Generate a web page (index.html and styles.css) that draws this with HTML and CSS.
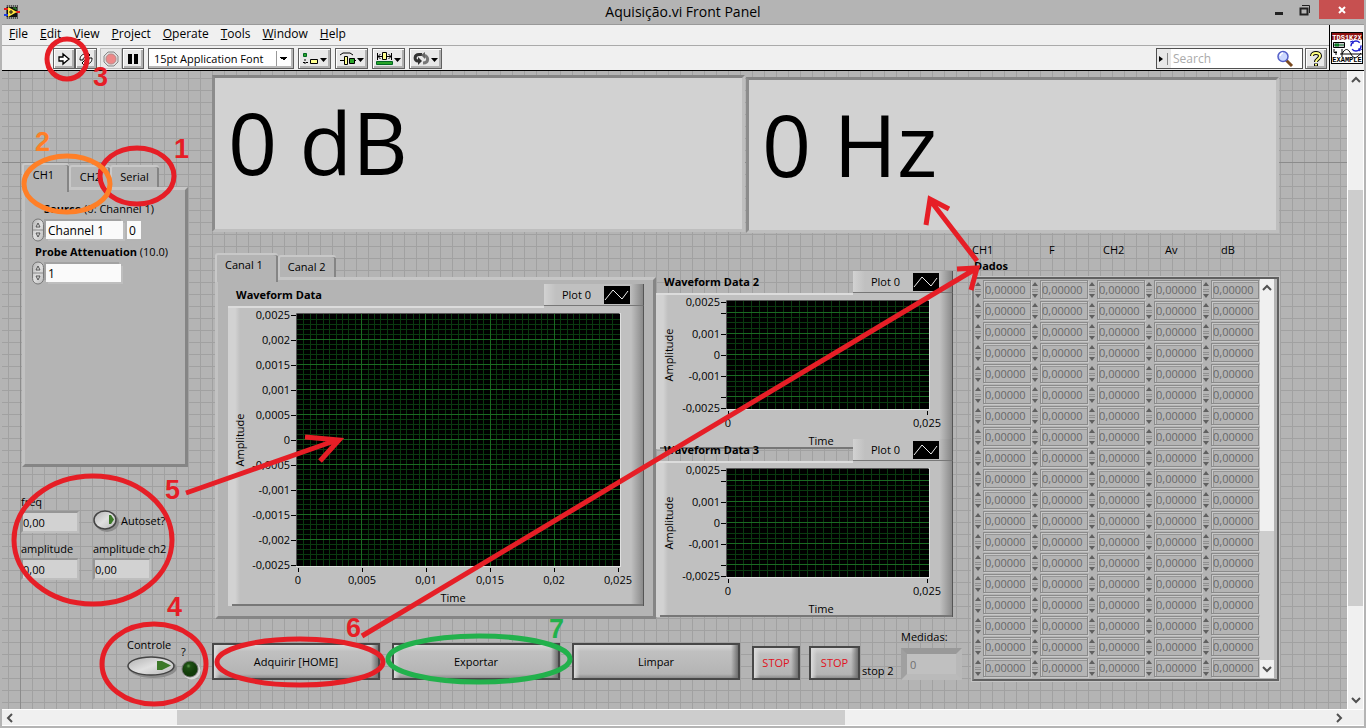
FILE: index.html
```html
<!DOCTYPE html>
<html lang="pt">
<head>
<meta charset="utf-8">
<title>Aquisição.vi Front Panel</title>
<link rel="stylesheet" href="styles.css">
</head>
<body>
<div class="window">
  <header class="titlebar">
    <svg class="app-icon" width="16" height="14" viewBox="0 0 16 14"><rect x="2" width="12" height="14" fill="#555"/><path d="M2 1h12M2 13h12" stroke="#ddd" stroke-dasharray="1 1"/><rect x="3" y="2" width="10" height="10" fill="#111"/><path d="M0 4h4M12 7h4" stroke="#e02020" stroke-width="2"/><path d="M0 10h4" stroke="#2040e0" stroke-width="2"/><path d="M4 2l9 5-9 5z" fill="#ffe640"/><path d="M5 7h4M7 5v4" stroke="#111"/><path d="M9 3h3v2" stroke="#30a030" fill="none"/></svg>
    <h1 class="title">Aquisição.vi Front Panel</h1>
    <div class="win-buttons">
      <button class="win-btn" aria-label="Minimize"><svg width="10" height="12"><path d="M1 9.500h8" stroke="#222" stroke-width="3"/></svg></button>
      <button class="win-btn" aria-label="Restore"><svg width="12" height="12"><path d="M1.500 4.500h7v6h-7z" fill="none" stroke="#222" stroke-width="2"/><path d="M3 1.500h7.500V9" fill="none" stroke="#222"/></svg></button>
      <button class="win-btn close" aria-label="Close"><svg width="10" height="10"><path d="M2 2l6 6M8 2L2 8" stroke="#fff" stroke-width="2"/></svg></button>
    </div>
  </header>

  <div class="chrome">
    <div class="bars">
      <nav class="menu">
        <a href="#"><u>F</u>ile</a><a href="#"><u>E</u>dit</a><a href="#"><u>V</u>iew</a><a href="#"><u>P</u>roject</a><a href="#"><u>O</u>perate</a><a href="#"><u>T</u>ools</a><a href="#"><u>W</u>indow</a><a href="#"><u>H</u>elp</a>
      </nav>
      <div class="toolbar">
        <div class="tool-group">
          <button class="tool" aria-label="Run"><svg width="14" height="14"><path d="M2 5h4V2l6 5-6 5V9H2z" fill="#fff" stroke="#000" stroke-width="1.300"/></svg></button>
          <button class="tool" aria-label="Run continuously"><svg width="18" height="16"><path d="M3 9c0-4 2-6 6-6V0l4 4-4 4V6C7 6 6 7 6 9z" fill="#fff" stroke="#000"/><path d="M15 7c0 4-2 6-6 6v3l-4-4 4-4v2c2 0 3-1 3-3z" fill="#fff" stroke="#000"/></svg></button>
        </div>
        <div class="tool-group">
          <button class="tool flat" aria-label="Abort"><svg width="16" height="16"><path d="M5 1h6l4 4v6l-4 4H5l-4-4V5z" fill="#ddd" stroke="#888"/><circle cx="8" cy="8" r="5" fill="#ee8888" stroke="#b88"/></svg></button>
          <button class="tool" aria-label="Pause"><svg width="12" height="12"><path d="M1 1h4v10H1zM7 1h4v10H7z" fill="#000"/></svg></button>
        </div>
        <select class="font-select" aria-label="Font"><option>15pt Application Font</option></select>
        <button class="tool wide" aria-label="Align"><svg width="26" height="14"><path d="M1.500 1.500h3v3h-3z" fill="#28a428" stroke="#062"/><path d="M3 7v6M1 10.500h5" stroke="#000" stroke-dasharray="2 1"/><path d="M8.500 7.500h7v4h-7z" fill="#ffff90" stroke="#000"/><path d="M18 6h7l-3.500 4z"/></svg></button>
        <button class="tool wide" aria-label="Distribute"><svg width="26" height="14"><path d="M1 3l3-2h7l3 2" fill="none" stroke="#000"/><path d="M1 8.500h4M15 8.500h2" stroke="#000"/><path d="M5.500 4.500h3v8h-3z" fill="#ffff90" stroke="#000"/><path d="M10.500 6.500h5v5h-5z" fill="#28a428" stroke="#000"/><path d="M18 6h7l-3.500 4z"/></svg></button>
        <button class="tool wide" aria-label="Resize"><svg width="26" height="14"><path d="M1.500 1v7M15.500 1v7M2 4.500h4M11 4.500h4M4.500 2L2 4.500l2.500 2.500M12.500 2l2.500 2.500-2.500 2.500" fill="none" stroke="#000"/><path d="M6.500 .5h4v7h-4z" fill="#ffff90" stroke="#000"/><path d="M.5 9.500h16v3H.5z" fill="#28a428" stroke="#062"/><path d="M18 6h7l-3.500 4z"/></svg></button>
        <button class="tool wide" aria-label="Reorder"><svg width="26" height="14"><path d="M9 2.500H6C1 2.500 1 9 5 9" fill="none" stroke="#333" stroke-width="3"/><path d="M5 5v8l4-4z" fill="#333"/><path d="M10 11c6 0 6-7 1-7.500" fill="none" stroke="#777" stroke-width="3"/><path d="M12 0v7L8 3z" fill="#666"/><path d="M18 6h7l-3.500 4z"/></svg></button>
        <div class="search">
          <button class="search-toggle" aria-label="Search options"><svg width="12" height="12"><path d="M1 3l4 3-4 3z"/><path d="M9.500 0v12" stroke="#888"/></svg></button>
          <input type="search" placeholder="Search" aria-label="Search">
          <svg width="18" height="18"><path d="M10 10l6 6" stroke="#7a4a20" stroke-width="3"/><circle cx="7" cy="6.500" r="5" fill="#ccd8ff" stroke="#5560c8" stroke-width="1.500"/><path d="M4 6q1-3 3-3" stroke="#fff" fill="none" stroke-width="1.500"/></svg>
        </div>
        <button class="tool help" aria-label="Help"><svg width="14" height="16"><path d="M3 5c0-4 8-4 8 0 0 3-4 3-4 6M7 12.500v2.500" fill="none" stroke="#000" stroke-width="4"/><path d="M3 5c0-4 8-4 8 0 0 3-4 3-4 6M7 13v1.500" fill="none" stroke="#ffff80" stroke-width="2"/></svg></button>
      </div>
    </div>
    <div class="vi-icon">
      <svg width="32" height="32"><rect x=".5" y=".5" width="31" height="31" fill="#fff" stroke="#000"/><rect x="1" y="1" width="30" height="7" fill="#8c1010"/><path d="M2.500 10.500h11v5h-11z" fill="#ccc" stroke="#000"/><path d="M4 12h4v2H4zM10 12v2M12 12v2" fill="#2a2" stroke="#062"/><path d="M3 17v3.500h3M5 19v4" fill="none" stroke="#000"/><path d="M9 22h22M11 25V17M11 22c3-6 6-6 9 0s6 4 10-1" fill="none" stroke="#000"/><circle cx="25" cy="14" r="5" fill="none" stroke="#2020d0" stroke-width="1.500" stroke-dasharray="12 3"/><path d="M19 10l3-1v3M31 17l-3 2v-3" fill="none" stroke="#2020d0"/><text class="vi-top" x="16" y="7.500">TDS1K2X</text><text class="vi-bottom" x="16" y="30">EXAMPLE</text></svg>
    </div>
  </div>

  <div class="workspace">
    <main class="canvas">
      <section class="side">
        <div class="tabs">
          <button class="tab active">CH1</button><button class="tab">CH2</button><button class="tab last">Serial</button>
        </div>
        <div class="tab-body side-body">
          <label class="caption source" for="source"><b>Source</b> (0: Channel 1)</label>
          <div class="ring">
            <svg class="spin" width="12" height="24" viewBox="0 0 12 24"><use href="#spinner"/></svg>
            <input id="source" class="field channel" value="Channel 1"><input class="field index" value="0" aria-label="Source index">
          </div>
          <label class="caption" for="probe"><b>Probe Attenuation</b> (10.0)</label>
          <div class="ring">
            <svg class="spin" width="12" height="24" viewBox="0 0 12 24"><use href="#spinner"/></svg>
            <input id="probe" class="field probe" value="1">
          </div>
        </div>

        <div class="readings">
          <div class="reading"><label for="freq">freq</label><input id="freq" class="indicator" value="0,00" readonly></div>
          <button class="oval-control"><svg width="28" height="24"><use href="#oval-small"/></svg><span>Autoset?</span></button>
          <div class="reading"><label for="amp1">amplitude</label><input id="amp1" class="indicator" value="0,00" readonly></div>
          <div class="reading"><label for="amp2">amplitude ch2</label><input id="amp2" class="indicator" value="0,00" readonly></div>
        </div>

        <div class="controle">
          <button class="oval-stack"><span>Controle</span><svg width="52" height="24"><ellipse cx="26" cy="13" rx="24" ry="10" fill="#8c8c8c"/><ellipse cx="24" cy="11" rx="23" ry="9" fill="url(#metal)" stroke="#444" stroke-width="1.500"/><path d="M30 6h5l9 4.500-9 4.500h-5z" fill="#3c7828"/></svg></button>
          <div class="led"><span>?</span><svg width="20" height="20"><circle cx="10.500" cy="10.500" r="9" fill="#d8d8d8"/><circle cx="9" cy="9" r="8.500" fill="#777"/><circle cx="9" cy="9" r="7.500" fill="url(#led)"/></svg></div>
        </div>
      </section>

      <section class="main">
        <div class="displays">
          <output class="display">0 dB</output>
          <output class="display second">0 Hz</output>
        </div>
        <div class="lower">
          <div class="plots-side">
            <div class="plots">
              <div class="canal">
                <div class="tabs">
                  <button class="tab active">Canal 1</button><button class="tab last">Canal 2</button>
                </div>
                <div class="tab-body canal-body">
                  <div class="graph">
                    <div class="graph-head"><h2>Waveform Data</h2><div class="legend">Plot 0 <svg width="26" height="18"><use href="#wave"/></svg></div></div>
                    <svg class="plot" data-plot="large" width="416" height="300"></svg>
                  </div>
                </div>
              </div>
              <div class="stack">
                <div class="graph">
                  <div class="graph-head"><h2>Waveform Data 2</h2><div class="legend">Plot 0 <svg width="26" height="18"><use href="#wave"/></svg></div></div>
                  <svg class="plot" data-plot="small" width="297" height="156"></svg>
                </div>
                <div class="graph overlap">
                  <div class="graph-head"><h2>Waveform Data 3</h2><div class="legend">Plot 0 <svg width="26" height="18"><use href="#wave"/></svg></div></div>
                  <svg class="plot" data-plot="small" width="297" height="156"></svg>
                </div>
              </div>
            </div>
            <div class="actions">
              <button class="push">Adquirir [HOME]</button>
              <button class="push">Exportar</button>
              <button class="push">Limpar</button>
              <button class="push stop">STOP</button>
              <button class="push stop two" id="stop2">STOP</button>
              <label class="stop-label" for="stop2">stop 2</label>
              <div class="medidas"><label for="medidas">Medidas:</label><input id="medidas" value="0" disabled></div>
            </div>
          </div>

          <div class="data">
            <div class="columns"><span>CH1</span><span>F</span><span>CH2</span><span>Av</span><span>dB</span></div>
            <h2 class="data-title">Dados</h2>
            <div class="data-frame">
              <table aria-label="Dados"><tbody id="rows"></tbody></table>
              <div class="vscroll inner">
                <svg width="10" height="8"><use href="#chev-up"/></svg>
                <div class="thumb"></div>
                <svg width="10" height="8"><use href="#chev-down"/></svg>
              </div>
            </div>
          </div>
        </div>
      </section>
    </main>
    <div class="vscroll outer">
      <svg width="10" height="8"><use href="#chev-up"/></svg>
      <div class="thumb"></div>
      <svg width="10" height="8"><use href="#chev-down"/></svg>
    </div>
  </div>
  <div class="hscroll">
    <svg width="8" height="10"><path d="M6 1L2 5l4 4" fill="none" stroke="#505050" stroke-width="2"/></svg>
    <div class="hthumb"></div>
    <svg width="8" height="10"><path d="M2 1l4 4-4 4" fill="none" stroke="#505050" stroke-width="2"/></svg>
  </div>

  <svg class="notes" width="1366" height="728" viewBox="0 0 1366 728">
    <g class="red">
      <ellipse cx="67" cy="59" rx="20" ry="20"/>
      <ellipse cx="137" cy="176" rx="37" ry="28"/>
      <ellipse cx="93" cy="540" rx="79" ry="64"/>
      <ellipse cx="154" cy="664" rx="52" ry="40"/>
      <ellipse cx="300" cy="662" rx="83" ry="23"/>
      <path d="M186 493L337 440M305 437l34 3-19 21"/>
      <path d="M362 636L977 268M957 269l20-1-6 22"/>
      <path d="M977 261L930 200M926 225l4-26 19 10"/>
    </g>
    <ellipse class="orange" cx="67" cy="184" rx="43" ry="28"/>
    <ellipse class="green" cx="479" cy="659" rx="91" ry="23"/>
    <g class="digits">
      <text x="174" y="158">1</text><text class="orange-text" x="35" y="151">2</text><text x="93" y="86">3</text><text x="167" y="616">4</text><text x="165" y="499">5</text><text x="346" y="637">6</text><text class="green-text" x="549" y="638">7</text>
    </g>
  </svg>
</div>

<svg class="defs" width="0" height="0">
  <defs>
    <linearGradient id="metal" x1="0" x2="1" y1="0" y2="1"><stop offset="0" stop-color="#b0b0b0"/><stop offset=".5" stop-color="#e0e0e0"/><stop offset="1" stop-color="#b8b8b8"/></linearGradient>
    <radialGradient id="led" cx=".4" cy=".3"><stop offset="0" stop-color="#5c9a4c"/><stop offset=".3" stop-color="#1e5014"/><stop offset="1" stop-color="#123c0a"/></radialGradient>
    <linearGradient id="edge-left"><stop offset="0" stop-color="#d2d2d2"/><stop offset=".6" stop-color="#d2d2d2"/><stop offset="1" stop-color="#c0c0c0"/></linearGradient>
    <linearGradient id="edge-right"><stop offset="0" stop-color="#c0c0c0"/><stop offset="1" stop-color="#868686"/></linearGradient>
    <g id="spinner"><rect x=".5" y="1" width="11" height="22" rx="5.500" fill="url(#metal)" stroke="#777"/><path d="M1 12h10" stroke="#888"/><path d="M4 9l2-4 2 4zM4 15l2 4 2-4z" fill="#ddd" stroke="#555"/></g>
    <g id="oval-small"><ellipse cx="14" cy="13" rx="12" ry="10" fill="#8c8c8c"/><ellipse cx="12" cy="11" rx="11" ry="9" fill="url(#metal)" stroke="#444" stroke-width="1.500"/><path d="M16 6h2l3 4.500-3 4.500h-2z" fill="#3c7828"/></g>
    <g id="wave"><rect width="26" height="18" fill="#000"/><path d="M1 14L9 4l9 9 6-8" fill="none" stroke="#eee"/></g>
    <path id="chev-up" d="M1 6l4-4 4 4" fill="none" stroke="#505050" stroke-width="2"/>
    <path id="chev-down" d="M1 2l4 4 4-4" fill="none" stroke="#505050" stroke-width="2"/>
  </defs>
</svg>
<script src="panel.js"></script>
</body>
</html>
```

FILE: styles.css
```css
* { box-sizing: border-box; }
body { margin: 0; background: #b4b4b4; color: #000; font: 12px/14px "Open Sans", "Noto Sans", sans-serif; }
button, input, select { font: inherit; color: inherit; margin: 0; padding: 0; border: 0; border-radius: 0; background: none; }
h1, h2 { margin: 0; font: inherit; }
svg { display: block; flex: none; }
.defs { position: absolute; }
.window { position: relative; display: flex; flex-direction: column; min-height: 100vh; padding: 0 2px 2px; overflow: hidden; }

.titlebar { display: grid; grid-template-columns: 1fr auto 1fr; align-items: center; height: 25px; border-bottom: 1px solid #999; }
.app-icon { margin-left: 2px; }
.title { font-size: 14px; line-height: 20px; }
.win-buttons { display: flex; justify-content: flex-end; align-self: start; }
.win-btn { display: grid; place-items: center; width: 26px; height: 19px; }
.close { width: 45px; margin-left: 1px; background: #c75050; }

.chrome { display: flex; background: #f0f0f0; border-bottom: 1px solid #000; height: 46px; }
.bars { flex: 1; display: flex; flex-direction: column; }
.menu { display: flex; gap: 12px; height: 21px; padding: 1px 7px 0; border-bottom: 1px solid #aaa; }
.menu a { color: #000; text-decoration: none; line-height: 16px; }
.toolbar { flex: 1; display: flex; align-items: center; gap: 4px; padding: 1px 2px 0 51px; }
.tool-group { display: flex; }
.tool { display: grid; place-items: center; width: 22px; height: 21px; background: #e8e8e8; border: 1px solid #606060; box-shadow: inset 1px 1px #fff, inset -2px -2px #b0b0b0; }
.tool-group + .tool-group { margin-left: -1px; }
.flat { border-color: #c0c0c0; box-shadow: none; }
.wide { width: 33px; }
.font-select { appearance: none; width: 146px; height: 21px; padding-left: 5px; border: 1px solid #606060; background: linear-gradient(#999, #999) 127px 2px / 1px 15px no-repeat, linear-gradient(to bottom left, #000 50%, transparent 0) 131px 8px / 4px 4px no-repeat, linear-gradient(to bottom right, #000 50%, transparent 0) 135px 8px / 4px 4px no-repeat, #fff; box-shadow: inset -2px -2px #b8b8b8; font-size: 11px; }
.search { display: flex; align-items: center; width: 147px; height: 21px; margin-left: auto; padding-right: 8px; background: #fff; border: 1px solid #505050; }
.search-toggle { display: grid; place-items: center; width: 14px; height: 19px; background: #e8e8e8; }
.search input { flex: 1; min-width: 0; padding-left: 2px; outline: 0; }
.search input::placeholder { color: #aaa; }
.help { margin-left: -2px; }
.vi-icon { display: grid; align-content: center; width: 35px; padding-left: 1px; border-left: 1px solid #000; }
.vi-icon text { font: bold 7px "Liberation Mono", monospace; text-anchor: middle; }
.vi-icon .vi-top { fill: #fff; }

.workspace { flex: 1; display: flex; }
.canvas { flex: 1; display: flex; min-width: 0; overflow: hidden; background:
  linear-gradient(#8c8c8c, #8c8c8c) 18px 0 / 1px 100% no-repeat,
  linear-gradient(#8c8c8c, #8c8c8c) 0 91px / 100% 1px no-repeat,
  repeating-linear-gradient(90deg, transparent 0 6px, #a1a1a1 6px 7px, transparent 7px 12px),
  repeating-linear-gradient(transparent 0 7px, #a1a1a1 7px 8px, transparent 8px 12px), #b4b4b4; }
.side { width: 210px; flex: none; padding: 92px 0 0 20px; }
.main { flex: 1; max-width: 1067px; padding-top: 4px; }

.tabs { display: flex; align-items: flex-end; height: 24px; font-size: 11px; }
.tab { height: 22px; padding: 0 8px; background: #b4b4b4; border: solid #c8c8c8; border-width: 2px 0 0 2px; border-radius: 3px 3px 0 0; box-shadow: inset -2px 0 #858585; }
.tab.active { height: 29px; margin-bottom: -5px; padding: 0 14px 8px 8px; position: relative; z-index: 1; }
.tab.last { padding: 0 10px 0 8px; }
.tab-body { width: 166px; border: 3px solid; border-color: #c6c6c6 #858585 #858585 #c2c2c2; background: #b4b4b4; }
.side-body { height: 280px; padding: 12px 0 0 7px; font-size: 11px; }
.side .tab { min-width: 41px; }
.side .tab.active { min-width: 47px; }
.side .tab.last { min-width: 49px; }
.caption { display: block; padding-left: 3px; white-space: nowrap; }
.source { padding-left: 12px; }
.ring { display: flex; align-items: center; height: 28px; margin-bottom: 1px; }
.spin { margin-right: 2px; }
.field { height: 18px; padding-left: 2px; background: #fafafa; box-shadow: -2px -2px #a2a2a2, 2px 2px #bebebe; font-size: 12px; }
.channel { width: 77px; }
.probe { width: 75px; }
.index { width: 14px; margin-left: 4px; box-shadow: none; }

.readings { display: grid; grid-template-columns: 72px 1fr; row-gap: 9px; margin: 28px 0 0 -1px; font-size: 11px; }
.reading { display: flex; flex-direction: column; gap: 2px; white-space: nowrap; }
.indicator { width: 58px; height: 22px; padding-left: 0; background: #d2d2d2; border: 2px solid; border-color: #969696 #bebebe #bebebe #969696; }
.oval-control { display: flex; align-items: flex-end; white-space: nowrap; }
.oval-control span { padding-bottom: 5px; }
.controle { display: flex; gap: 2px; margin: 58px 0 0 105px; font-size: 11px; }
.oval-stack { display: grid; gap: 1px; text-align: left; }
.led { display: grid; gap: 1px; padding: 7px 0 0; line-height: 14px; }

.displays { display: flex; gap: 1px; }
.display { flex: 1; height: 157px; padding-left: 13px; font-size: 86px; line-height: 128px; background: #d2d2d2; border: 3px solid; border-color: #858585 #bebebe #bebebe #8c8c8c; white-space: nowrap; }
.second { margin-top: 2px; height: 156px; }

.lower { display: flex; justify-content: space-between; align-items: flex-start; }
.plots-side { width: 754px; }
.plots { display: flex; align-items: flex-start; padding-left: 3px; }
.canal { width: 441px; padding-top: 20px; }
.canal .tab.active { padding-right: 15px; }
.canal-body { width: 441px; height: 342px; padding: 4px 9px 0 10px; }
.stack { padding-top: 38px; }
.overlap { margin-top: -10px; position: relative; }
.graph-head { display: flex; justify-content: space-between; align-items: flex-start; height: 22px; }
.graph-head h2 { padding: 4px 0 0 8px; font-size: 11px; font-weight: 700; }
.legend { display: flex; align-items: center; justify-content: flex-end; gap: 13px; width: 100px; height: 22px; padding-right: 13px; font-size: 11px; border-bottom: 1px solid #777; background: linear-gradient(90deg, #d2d2d2, #c0c0c0 12px 86px, #868686); border-right: 1px solid #555; }
.plot text { font-size: 11px; }
.plot .ylab { text-anchor: end; }
.plot .mid { text-anchor: middle; }

.actions { display: flex; align-items: flex-start; padding-top: 8px; }
.push { width: 168px; height: 37px; margin: 16px 12px 0 0; font-size: 11px; background: linear-gradient(90deg, #dcdcdc, transparent 6px calc(100% - 7px), #707070), linear-gradient(#d6d6d6, #c0c0c0 20%, #b4b4b4 88%, #8c8c8c); border: 2px solid #484848; }
.stop { width: 48px; height: 34px; margin: 19px 9px 0 0; color: #e01020; }
.two { width: 51px; margin-right: 2px; }
.stop-label { width: 39px; padding-top: 37px; font-size: 11px; white-space: nowrap; }
.medidas { display: flex; flex-direction: column; gap: 4px; padding-top: 3px; font-size: 11px; }
.medidas input { width: 61px; height: 32px; padding-left: 3px; color: #707070; background: #c0c0c0; border: 6px solid; border-color: #999 #b8b8b8 #bababa #a0a0a0; }

.data { width: 307px; padding-top: 10px; font-size: 11px; }
.columns { display: grid; grid-template-columns: 77px 54px 62px 56px 1fr; height: 16px; }
.data-title { font-weight: 700; padding: 0 0 4px 2px; }
.data-frame { display: flex; justify-content: space-between; padding: 0 3px 1px 1px; border: 2px solid; border-color: #606060 #606060 #606060 #808080; outline: 1px solid #c4c4c4; background: #b4b4b4; }
table { border-collapse: collapse; }
td { width: 57px; height: 21px; padding: 0; }
.cell { display: flex; gap: 2px; width: 57px; height: 20px; }
.cell input { width: 48px; height: 19px; padding: 0 0 0 1px; color: #686868; border: 1px solid #8a8a8a; box-shadow: inset 1px 1px #c8c8c8, inset 2px 2px #969696, 1px 1px #c8c8c8; }

.vscroll { display: flex; flex-direction: column; align-items: center; background: #f0f0f0; }
.thumb { background: #cdcdcd; width: 100%; }
.outer { width: 17px; padding: 5px 0; border-left: 1px solid #fff; border-right: 1px solid #fff; }
.outer .thumb { flex: 416; margin: 106px 0 90px; }
.inner { width: 16px; padding: 5px 0; }
.inner .thumb { flex: 1; margin: 239px 0 5px; }
.hscroll { display: flex; align-items: center; height: 17px; padding: 0 21px 0 4px; background: #f0f0f0; border-top: 1px solid #fff; border-bottom: 1px solid #fff; }
.hthumb { flex: 667; height: 100%; margin: 0 490px 0 163px; background: #cdcdcd; }

.notes { position: absolute; left: 0; top: 0; z-index: 2; pointer-events: none; }
.notes ellipse, .notes path { fill: none; stroke: #e61e26; stroke-width: 5; }
.notes .orange { stroke: #ff7f27; }
.notes .green { stroke: #22b14c; }
.digits { font: bold 27px "Liberation Sans", Arial, sans-serif; fill: #e61e26; }
.orange-text { fill: #ff7f27; }
.green-text { fill: #22b14c; }
```

FILE: panel.js
```js
// Data grid: 19 rows of five disabled numeric controls.
const arrows = '<svg width="6" height="19"><path d="M0 9.500h6M0 11.500h6" stroke="#909090"/><path d="M0 6h6L3 2zM0 14h6l-3 4z" fill="#606060"/></svg>';
const names = ['CH1', 'F', 'CH2', 'Av', 'dB'];
let rows = '';
for (let r = 1; r <= 19; r++) {
  rows += '<tr>' + names.map(n =>
    `<td><div class="cell">${arrows}<input value="0,00000" aria-label="${n} ${r}" disabled></div></td>`).join('') + '</tr>';
}
document.getElementById('rows').innerHTML = rows;

// Waveform graphs: frame, plot area, grid, ticks and scale labels.
const kinds = {
  large: {
    x: 69, y: 8, w: 323, h: 252, nx: 50, ny: 50, majorX: 10, majorY: 5, offY: 0,
    yt: ['0,0025', '0,002', '0,0015', '0,001', '0,0005', '0', '-0,0005', '-0,001', '-0,0015', '-0,002', '-0,0025'].map((t, i) => [i / 10, t]),
    xt: ['0', '0,005', '0,01', '0,015', '0,02', '0,025'].map((t, i) => [i / 5, t]),
    labelX: 12, timeX: 225, timeY: 296
  },
  small: {
    x: 71, y: 8, w: 202, h: 108, nx: 25, ny: 20, majorX: 0, majorY: 4, offY: 2,
    yt: [[0, '0,0025'], [.1, ''], [.3, '0,001'], [.5, '0'], [.7, '-0,001'], [.9, ''], [1, '-0,0025']],
    xt: [[0, '0'], [1, '0,025']],
    labelX: 13, timeX: 165, timeY: 152
  }
};
document.querySelectorAll('[data-plot]').forEach(svg => {
  const k = kinds[svg.dataset.plot];
  const W = +svg.getAttribute('width'), H = +svg.getAttribute('height');
  let minor = '', major = '', ticks = '', text = '';
  for (let i = 1; i < k.nx; i++) {
    const d = `M${k.x + Math.round(i * (k.w - 2) / k.nx) + .5} ${k.y}v${k.h}`;
    if (k.majorX && i % k.majorX === 0) major += d; else minor += d;
  }
  for (let i = 1; i < k.ny; i++) {
    const d = `M${k.x} ${k.y + Math.round(i * (k.h - 2) / k.ny) + .5}h${k.w}`;
    if ((i - k.offY) % k.majorY === 0) major += d; else minor += d;
  }
  k.yt.forEach(([p, t]) => {
    const y = k.y + 1 + Math.round(p * (k.h - 2));
    ticks += `M${k.x - 6} ${y + .5}h5`;
    text += `<text class="ylab" x="${k.x - 7}" y="${y + 4}">${t}</text>`;
  });
  k.xt.forEach(([p, t]) => {
    const x = k.x + 1 + Math.round(p * (k.w - 3));
    ticks += `M${x + .5} ${k.y + k.h + 2}v4`;
    text += `<text class="mid" x="${x}" y="${k.y + k.h + 18}">${t}</text>`;
  });
  const cy = k.y + k.h / 2;
  svg.innerHTML = `<rect width="${W}" height="${H}" fill="#c0c0c0"/>
    <rect width="12" height="${H}" fill="url(#edge-left)"/>
    <rect x="${W - 13}" width="13" height="${H}" fill="url(#edge-right)"/>
    <path d="M0 1h${W - 100}" stroke="#dcdcdc" stroke-width="2"/>
    <path d="M4 ${H - 1}H${W - 1}" stroke="#777" stroke-width="2"/><path d="M${W - .5} 0V${H}" stroke="#555"/>
    <rect x="${k.x - 1}" y="${k.y - 1}" width="${k.w + 2}" height="${k.h + 2}" fill="#e0e0e0"/>
    <path d="M${k.x - .5} ${k.y + k.h}V${k.y - .5}h${k.w}" fill="none" stroke="#555"/>
    <rect x="${k.x}" y="${k.y}" width="${k.w}" height="${k.h}" fill="#000"/>
    <path d="${minor}" stroke="#0a3a10"/><path d="${major}" stroke="#1a6a22"/><path d="${ticks}" stroke="#000"/>${text}
    <text class="mid" x="${k.timeX}" y="${k.timeY}">Time</text>
    <text class="mid" transform="translate(${k.labelX + 4} ${cy}) rotate(-90)">Amplitude</text>`;
});
```
